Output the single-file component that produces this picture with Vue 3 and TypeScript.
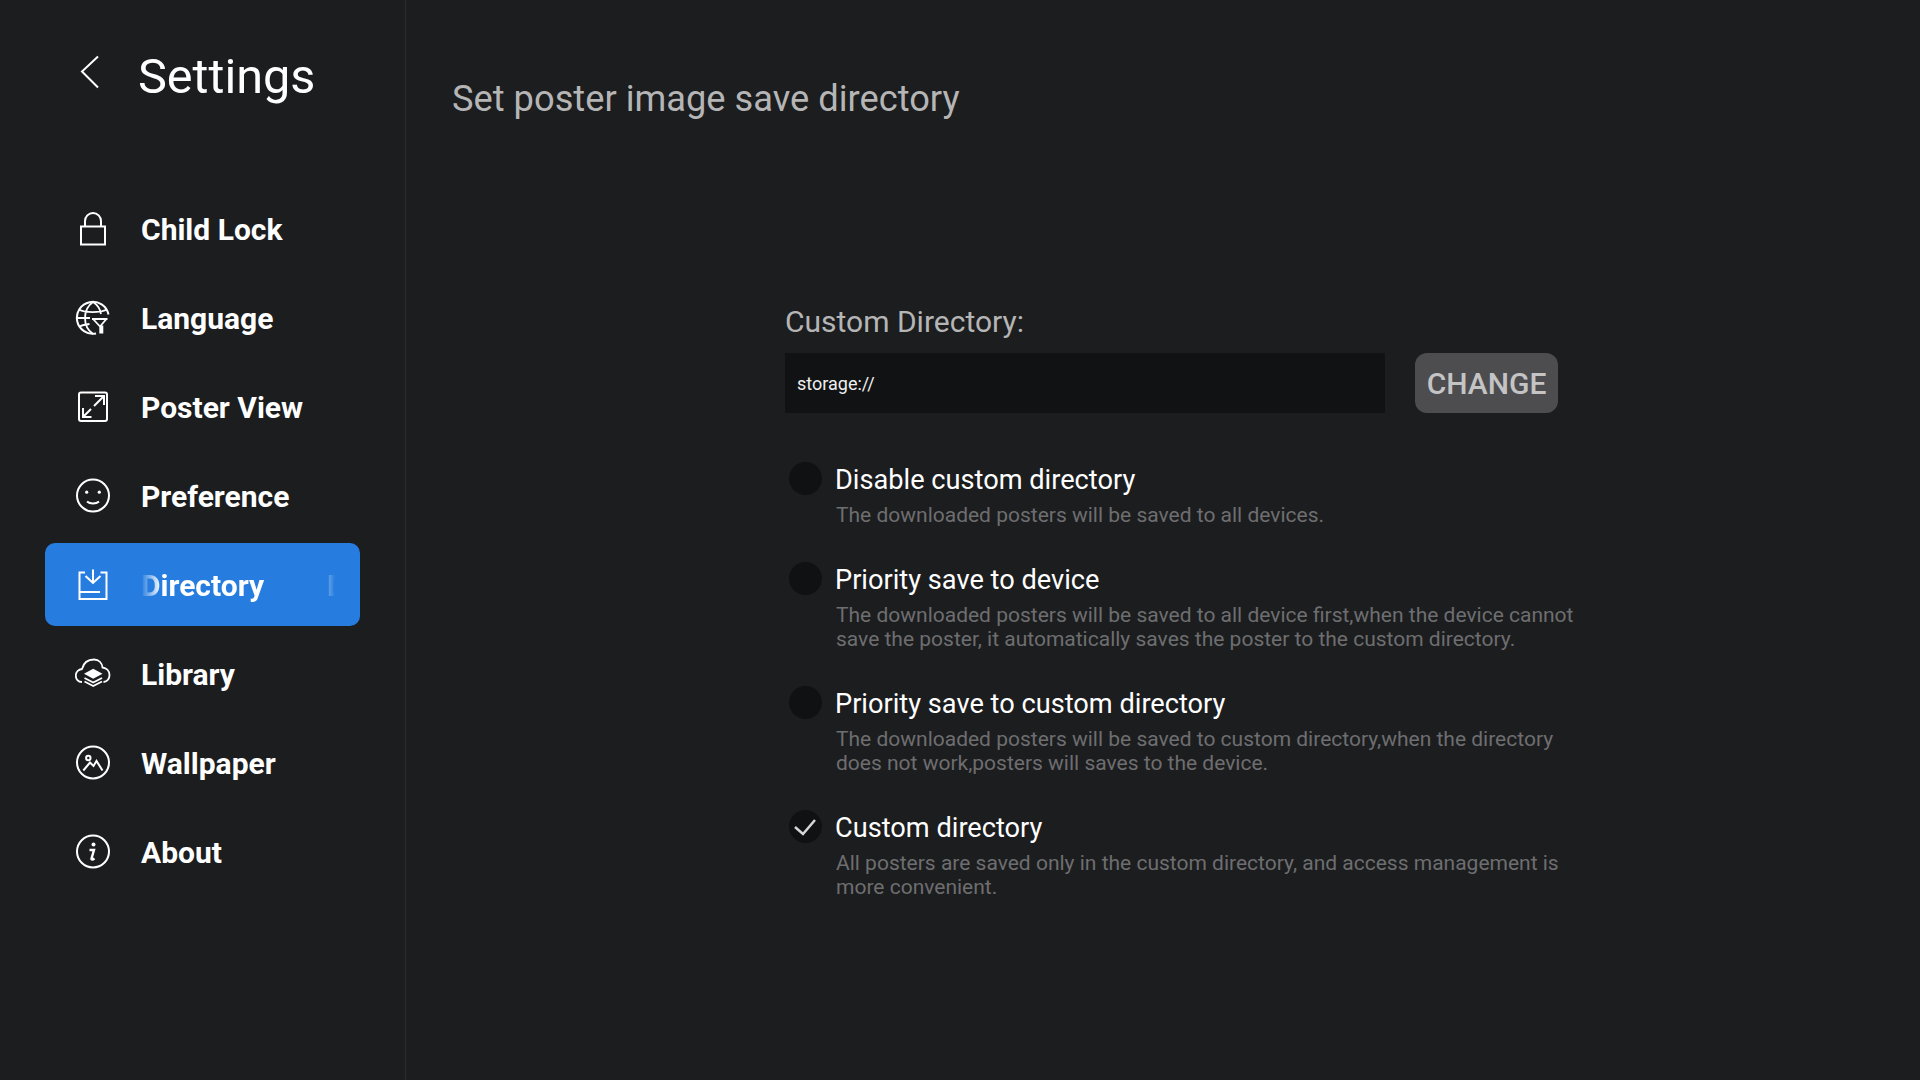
<script setup lang="ts">
interface Item { key: string; label: string }
interface Opt { title: string; desc: string; checked: boolean }
const items: Item[] = [
  { key: 'lock', label: 'Child Lock' },
  { key: 'lang', label: 'Language' },
  { key: 'view', label: 'Poster View' },
  { key: 'pref', label: 'Preference' },
  { key: 'dir', label: 'Directory' },
  { key: 'lib', label: 'Library' },
  { key: 'wall', label: 'Wallpaper' },
  { key: 'about', label: 'About' },
]
const options: Opt[] = [
  { title: 'Disable custom directory', desc: 'The downloaded posters will be saved to all devices.', checked: false },
  { title: 'Priority save to device', desc: 'The downloaded posters will be saved to all device first,when the device cannot save the poster, it automatically saves the poster to the custom directory.', checked: false },
  { title: 'Priority save to custom directory', desc: 'The downloaded posters will be saved to custom directory,when the directory does not work,posters will saves to the device.', checked: false },
  { title: 'Custom directory', desc: 'All posters are saved only in the custom directory, and access management is more convenient.', checked: true },
]
</script>

<template>
  <div class="page">
    <aside class="sidebar">
      <header class="head">
        <svg class="back" width="20" height="34" viewBox="0 0 20 34" fill="none" stroke="#fff" stroke-width="2">
          <path d="M18 1.500 2 16.500l16 16" />
        </svg>
        <h1 class="title">Settings</h1>
      </header>
      <nav class="nav">
        <div v-for="it in items" :key="it.key" class="item" :class="{ active: it.key === 'dir' }">
          <svg class="icon" width="36" height="36" viewBox="0 0 36 36" fill="none" stroke="#fff" stroke-width="2">
            <template v-if="it.key === 'lock'">
              <rect x="6" y="15.500" width="24" height="18" />
              <path d="M10 15V10a8 8 0 0 1 16 0v5" />
            </template>
            <template v-else-if="it.key === 'lang'">
              <path d="M33.500 14.500A16 16 0 1 0 21 33.500" />
              <path d="M18 2c-5 3.500-8 9-8 16s3 12.500 8 16M18 2c4 2.500 7 6.500 8 12M4 9.500c6 3.500 21 3.500 28 0M2 18h13M4.500 26.500c3-1.500 6-2 10-2.500" stroke-width="1.800" />
              <path d="M17 19h15.500M18.500 19.500l6.500 7M31 19.500l-6 7" stroke-width="1.800" />
              <path d="M24.300 25.500h4v8h-4z" fill="#fff" stroke="none" />
            </template>
            <template v-else-if="it.key === 'view'">
              <rect x="4" y="3.500" width="28" height="28.500" rx="2" />
              <path d="M29 7 19 17M20 7h9v9M8 28l8-8M8 19v9h8.500" />
            </template>
            <template v-else-if="it.key === 'pref'">
              <circle cx="18" cy="17.500" r="16" />
              <circle cx="11.700" cy="14.200" r="1.600" fill="#fff" stroke="none" />
              <circle cx="24.300" cy="14.200" r="1.600" fill="#fff" stroke="none" />
              <path d="M12 23.500c3 2.700 9 2.700 12 0" />
            </template>
            <template v-else-if="it.key === 'dir'">
              <path d="M10 5.500H4.500V32h27V5.500h-6" />
              <path d="M18 2.500V16M10.500 9 18 16l7.500-7M5 25h20" />
            </template>
            <template v-else-if="it.key === 'lib'">
              <path d="M7 26C3 26 .8 23 .8 19.500.8 16 3.500 13.500 7 13 8.500 7 13 3.500 19 3.500c5 0 8 3.500 8.500 8 4 .5 7 3.500 7 7.500 0 4-2.500 6.500-6 7" stroke-width="1.800" />
              <path d="M18.200 12.800 27.500 17.800 18.200 22.800 9 17.800Z" fill="#fff" stroke="none" />
              <path d="M9.500 22 18.200 26.500 27 22M9.500 25.500 18.200 30 27 25.500" stroke-width="1.800" />
            </template>
            <template v-else-if="it.key === 'wall'">
              <circle cx="18" cy="17.500" r="16" />
              <circle cx="13.300" cy="13" r="2.200" />
              <path d="M8.300 25.500 15 17.500l3.500 3.500 3-5 6 9.500" />
            </template>
            <template v-else>
              <circle cx="18" cy="17.500" r="16" />
              <circle cx="18.500" cy="10.500" r="2" fill="#fff" stroke="none" />
              <path d="M14.500 16h4.500l-2.500 8.500c-.3 1.300 1.200 1.300 3 0" stroke-width="2.400" />
            </template>
          </svg>
          <div v-if="it.key === 'dir'" class="marquee">
            <span class="run">{{ it.label }}</span><span class="run second">{{ it.label }}</span>
          </div>
          <span v-else class="label">{{ it.label }}</span>
        </div>
      </nav>
    </aside>
    <main class="main">
      <h2 class="heading">Set poster image save directory</h2>
      <section class="form">
        <div class="field-label">Custom Directory:</div>
        <div class="field">
          <div class="input">storage://</div>
          <button class="change">CHANGE</button>
        </div>
        <div class="options">
          <div v-for="o in options" :key="o.title" class="option">
            <span class="radio">
              <svg v-if="o.checked" width="33" height="33" viewBox="0 0 33 33" fill="none" stroke="#d6d6d6" stroke-width="2.500">
                <path d="M6 17l8 7L26 10" />
              </svg>
            </span>
            <div class="copy">
              <div class="opt-title">{{ o.title }}</div>
              <div class="opt-desc">{{ o.desc }}</div>
            </div>
          </div>
        </div>
      </section>
    </main>
  </div>
</template>

<style>
html, body { margin: 0; background: #1c1d1f; }
</style>

<style scoped>
.page {
  display: flex;
  width: 1920px;
  height: 1080px;
  overflow: hidden;
  background: #1c1d1f;
  font-family: Roboto, "Liberation Sans", sans-serif;
  color: #fff;
}
.sidebar {
  width: 406px;
  flex: none;
  box-sizing: border-box;
  border-right: 1px solid #2c2d2f;
  padding: 0 45px;
}
.head {
  display: flex;
  align-items: center;
  height: 187px;
  padding: 0 0 34px 35px;
  box-sizing: border-box;
}
.back { flex: none; margin-top: -9px; }
.title {
  margin: 0 0 0 38px;
  font-size: 48.6px;
  font-weight: 400;
  line-height: 56px;
}
.nav { display: flex; flex-direction: column; gap: 6px; width: 315px; }
.item {
  display: flex;
  align-items: center;
  height: 83px;
  padding-left: 30px;
  box-sizing: border-box;
  border-radius: 10px;
}
.item.active { background: #277ddf; }
.icon { flex: none; }
.label, .run { font-size: 30px; font-weight: 700; line-height: 40px; white-space: nowrap; padding-top: 2px; }
.label { margin-left: 30px; }
.marquee {
  margin-left: 30px;
  width: 194px;
  overflow: hidden;
  white-space: nowrap;
  display: flex;
  -webkit-mask-image: linear-gradient(to right, transparent 0, #000 20px, #000 170px, transparent 194px);
  mask-image: linear-gradient(to right, transparent 0, #000 20px, #000 170px, transparent 194px);
}
.second { margin-left: 63px; }
.main { flex: 1; min-width: 0; padding: 0 0 0 46px; }
.heading {
  margin: 0;
  padding-top: 78px;
  font-size: 36.25px;
  font-weight: 400;
  line-height: 42px;
  color: #b5b5b6;
}
.form { margin: 182px 0 0 333px; }
.field-label { font-size: 30px; line-height: 40px; color: #b5b5b6; }
.field { display: flex; gap: 30px; margin-top: 11px; }
.input {
  width: 600px;
  height: 60px;
  box-sizing: border-box;
  padding: 1px 0 0 12px;
  background: #111214;
  font-size: 18px;
  line-height: 60px;
  color: #eee;
}
.change {
  width: 143px;
  height: 60px;
  padding: 0;
  border: 0;
  border-radius: 12px;
  background: #4d4d4f;
  color: #c4c4c5;
  font: 500 30px Roboto, sans-serif;
}
.options { display: flex; flex-direction: column; gap: 35px; margin-top: 49px; }
.option { display: flex; }
.radio {
  width: 33px;
  height: 33px;
  flex: none;
  margin-left: 4px;
  border-radius: 50%;
  background: #101113;
}
.radio svg { display: block; }
.copy { margin-left: 13px; width: 745px; }
.opt-title { font-size: 27.2px; line-height: 33px; padding-top: 2px; margin-bottom: -2px; color: #fff; }
.opt-desc { margin-top: 8px; font-size: 21px; line-height: 24px; color: #6e6e70; padding-left: 1px; }
</style>
